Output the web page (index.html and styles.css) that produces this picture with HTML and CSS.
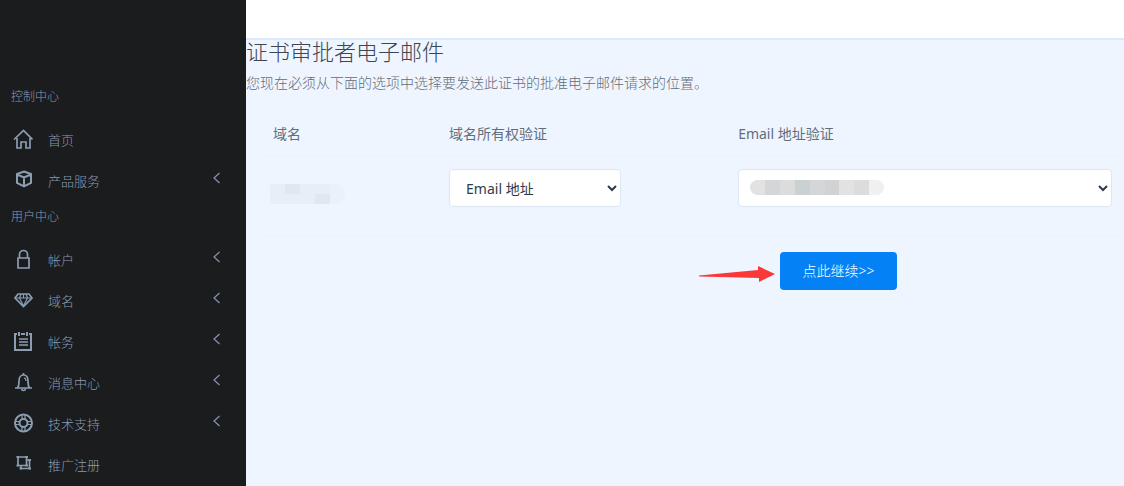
FILE: index.html
```html
<!DOCTYPE html>
<html lang="zh-CN">
<head>
<meta charset="utf-8">
<meta name="viewport" content="width=device-width, initial-scale=1">
<title>证书审批者电子邮件</title>
<link rel="stylesheet" href="styles.css">
</head>
<body>
<div class="layout">
  <nav class="sidebar">
    <h2 class="section">控制中心</h2>
    <ul class="menu">
      <li><a class="item" href="#">
        <svg class="icon" viewBox="0 0 20 20"><path d="M1 10.500 10.500 1.500l9 9M4 9v10h4v-6h5v6h4V9"/></svg>
        <span class="label">首页</span></a></li>
      <li><a class="item" href="#">
        <svg class="icon" viewBox="0 0 20 20"><path class="heavy" d="m11 1.500 7 2.500v9l-7 3.500L4 13V4zM4 4.500l7 3 7-3M11 7.500v9"/></svg>
        <span class="label">产品服务</span>
        <svg class="chevron" viewBox="0 0 8 12"><path d="M6.500 1 1 6l5.500 5"/></svg></a></li>
    </ul>
    <h2 class="section">用户中心</h2>
    <ul class="menu">
      <li><a class="item" href="#">
        <svg class="icon" viewBox="0 0 20 20"><path d="M5 9h11v10H5zM6.500 9V5.500a4 4 0 0 1 8 0V9"/></svg>
        <span class="label">帐户</span>
        <svg class="chevron" viewBox="0 0 8 12"><path d="M6.500 1 1 6l5.500 5"/></svg></a></li>
      <li><a class="item" href="#">
        <svg class="icon" viewBox="0 0 20 20"><path d="M5 4h11l3 4-8.500 8.500L2 8z"/><path class="thin" d="M2 8h17M8 4 6.500 8l4 8 4-8L13 4M10.500 4v4"/></svg>
        <span class="label">域名</span>
        <svg class="chevron" viewBox="0 0 8 12"><path d="M6.500 1 1 6l5.500 5"/></svg></a></li>
      <li><a class="item" href="#">
        <svg class="icon" viewBox="0 0 20 20"><path class="heavy" d="M4 3H2v16h16V3h-2M8 3h4M6 1v4M14 1v4"/><path d="M6 8h9M6 11h9M6 14h9"/></svg>
        <span class="label">帐务</span>
        <svg class="chevron" viewBox="0 0 8 12"><path d="M6.500 1 1 6l5.500 5"/></svg></a></li>
      <li><a class="item" href="#">
        <svg class="icon" viewBox="0 0 20 20"><path d="M2 16h17M4.500 16C6 14 6 12 6 9c0-4 2-6 4.500-6S15 5 15 9c0 3 0 5 1.500 7M10.500 1v2M8.500 17c.5 2 3.500 2 4 0"/><path class="thin" d="M11 6c1.500.2 2 1.500 2 3"/></svg>
        <span class="label">消息中心</span>
        <svg class="chevron" viewBox="0 0 8 12"><path d="M6.500 1 1 6l5.500 5"/></svg></a></li>
      <li><a class="item" href="#">
        <svg class="icon" viewBox="0 0 20 20"><circle class="heavy" cx="10.500" cy="10" r="8.500"/><circle class="heavy" cx="10.500" cy="10" r="4"/><path d="M9 1.500V6M12 1.500V6M9 14v4.500M12 14v4.500M2 8.500h4.500M2 11.500h4.500M14.500 8.500H19M14.500 11.500H19" class="thin"/></svg>
        <span class="label">技术支持</span>
        <svg class="chevron" viewBox="0 0 8 12"><path d="M6.500 1 1 6l5.500 5"/></svg></a></li>
      <li><a class="item" href="#">
        <svg class="icon" viewBox="0 0 20 20"><path d="M5 3h8.500v8.500H5zM13.500 6h3v8.500H8v-3"/><path class="dots" d="M3.500 2h2.500v2H3.500zM12.500 2H15v2h-2.500zM3.500 10.500H6v2H3.500zM12.500 10.500H15v2h-2.500zM15.500 5H18v2h-2.500zM15.500 13.500H18v2h-2.500zM6.500 13.500H9v2H6.500z"/></svg>
        <span class="label">推广注册</span></a></li>
    </ul>
  </nav>
  <main class="content">
    <header class="topbar"></header>
    <h1 class="title">证书审批者电子邮件</h1>
    <p class="intro">您现在必须从下面的选项中选择要发送此证书的批准电子邮件请求的位置。</p>
    <form class="form">
      <table class="approvers">
        <thead>
          <tr><th class="col-domain">域名</th><th class="col-method" id="method-label">域名所有权验证</th><th id="email-label">Email 地址验证</th></tr>
        </thead>
        <tbody>
          <tr>
            <td><div class="mask mask-domain"><i></i><i class="dark"></i><i></i><i></i><i class="pale"></i><i></i><i></i><i></i><i class="dark"></i><i class="pale"></i></div></td>
            <td><select class="select select-method" aria-labelledby="method-label"><option>Email 地址</option></select></td>
            <td><div class="field"><select class="select" aria-labelledby="email-label"><option></option></select>
              <div class="mask mask-email"><i class="g2"></i><i class="g4"></i><i class="g3"></i><i class="g6"></i><i class="g4"></i><i class="g5"></i><i class="g2"></i><i class="g3"></i><i class="g1"></i></div></div></td>
          </tr>
        </tbody>
      </table>
      <div class="actions">
        <svg class="arrow" viewBox="0 0 76 16"><path d="M0 9.500 59 4V0l17 8-16 8v-4L0 10.500z"/></svg>
        <button class="submit" type="button">点此继续&gt;&gt;</button>
      </div>
    </form>
  </main>
</div>
</body>
</html>
```
FILE: styles.css
```css
* { box-sizing: border-box; }
body {
  margin: 0;
  font-family: "Noto Sans", "Noto Sans CJK SC", sans-serif;
  font-size: 14px;
  line-height: 20px;
  font-weight: 300;
  color: #5f6d7b;
  background: #eff5ff;
}
.layout { display: flex; min-height: 100vh; }
.sidebar {
  flex: 0 0 246px;
  padding-top: 82px;
  background: #1b1c1e;
  color: #8a9bb2;
}
.section {
  margin: 0;
  padding: 6px 11px 14px;
  font-size: 12px;
  line-height: 18px;
  font-weight: 300;
}
.menu { margin: 0; padding: 0; list-style: none; }
.item {
  display: flex;
  align-items: center;
  height: 41px;
  padding: 0 25px 2px 13px;
  font-size: 13px;
  color: inherit;
  text-decoration: none;
}
.icon {
  width: 20px;
  height: 20px;
  margin: 0 15px 2px 0;
  fill: none;
  stroke: #8b9db3;
  stroke-width: 1.7;
}
.icon .heavy { stroke-width: 2; }
.icon .thin { stroke-width: 1.2; }
.icon .dots { fill: #8b9db3; stroke: none; }
.chevron {
  width: 8px;
  height: 12px;
  margin: 0 0 6px auto;
  fill: none;
  stroke: #8394ab;
  stroke-width: 1.2;
}
.content { flex: 1; min-width: 0; }
.topbar { height: 40px; background: #fff; border-bottom: 2px solid #dce9fb; }
.title {
  margin: 0;
  font-size: 22px;
  line-height: 22px;
  font-weight: 300;
  color: #3c4754;
}
.intro { margin: 11px 0 21px; }
.form { padding-left: 15px; }
.approvers { width: 100%; table-layout: fixed; border-collapse: collapse; }
.approvers th {
  padding: 10px 12px 12px;
  text-align: left;
  font-weight: 400;
  color: #5f6e7d;
}
.approvers td { height: 79px; padding: 12px; vertical-align: top; }
.approvers tr { border-bottom: 1px solid #ebf2fb; }
.col-domain { width: 20.4%; }
.col-method { width: 33.5%; }
.select {
  display: block;
  width: 100%;
  height: 38px;
  padding: 0 12px;
  border: 1px solid #dde6f3;
  border-radius: 4px;
  background-color: #fff;
  font: inherit;
  font-weight: 400;
  color: #2f3b4a;
}
.select-method { width: 172px; }
.field { position: relative; }
.mask { display: grid; overflow: hidden; }
.mask-domain {
  width: 75px;
  height: 20px;
  margin: 15px 0 0 -3px;
  grid-template-columns: repeat(5, 15px);
  border-radius: 2px 10px 10px 2px;
  background: #e7eef7;
}
.mask-domain .dark { background: #e0e7f1; }
.mask-domain .pale { background: #eaf1fb; }
.mask-email {
  position: absolute;
  left: 12px;
  top: 11px;
  width: 134px;
  height: 15px;
  grid-template-columns: repeat(9, 1fr);
  border-radius: 8px;
  pointer-events: none;
}
.g1 { background: #eff0f2; }
.g2 { background: #e2e2e3; }
.g3 { background: #dcdcdd; }
.g4 { background: #d5d6da; }
.g5 { background: #d1d2d4; }
.g6 { background: #cbd0d3; }
.actions {
  display: flex;
  align-items: center;
  justify-content: center;
  gap: 5px;
  padding: 16px 45px 0 0;
  margin-left: 256px;
}
.arrow { width: 76px; height: 16px; margin-top: 6px; fill: #fb3838; }
.submit {
  width: 117px;
  height: 38px;
  padding: 0;
  border: 0;
  border-radius: 4px;
  background: #0381f5;
  font: inherit;
  color: #fff;
}
```
